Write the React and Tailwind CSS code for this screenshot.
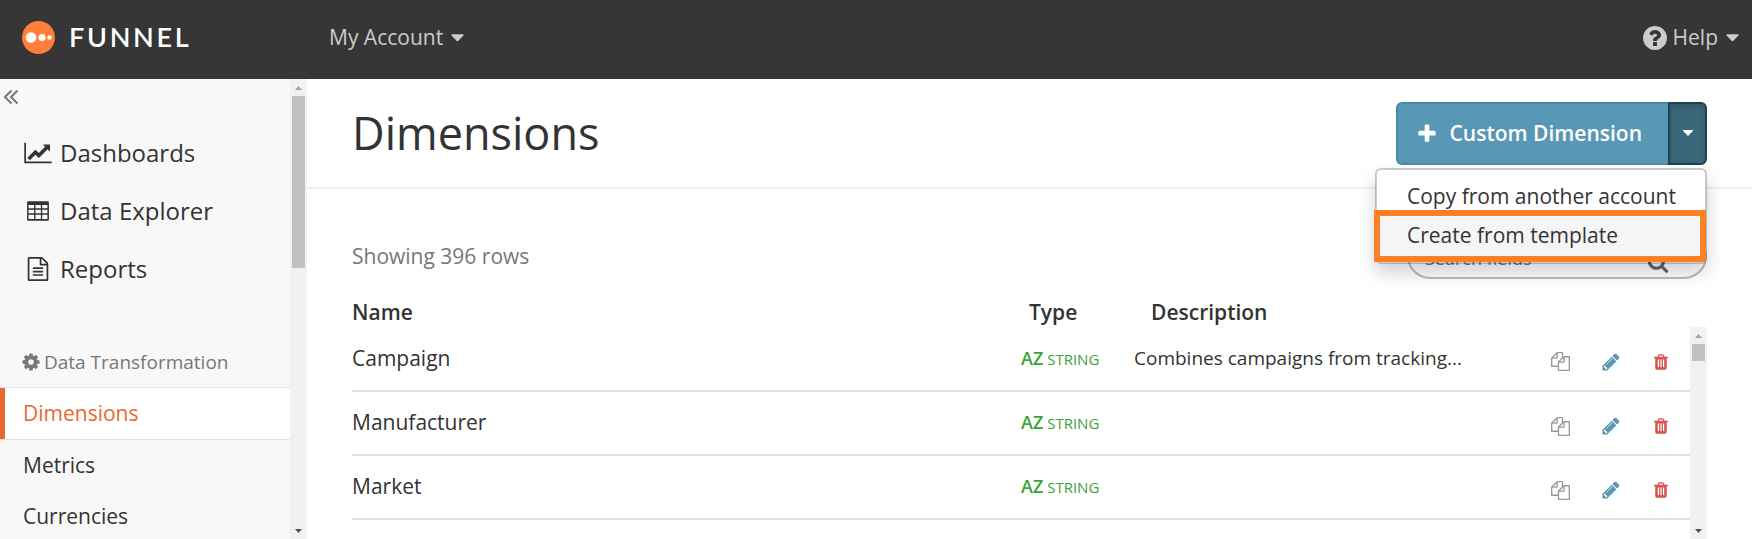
import { useState } from 'react';
import clsx from 'clsx';

// icon outlines, all on a 1792 grid
const icons = {
  table: 'M180 170h1432q100 0 100 100v1252q0 100-100 100h-1432q-100 0-100-100v-1252q0-100 100-100zM190 440v250h410v-250zM700 440v250h410v-250zM1210 440v250h390v-250zM190 800v270h410v-270zM700 800v270h410v-270zM1210 800v270h390v-270zM190 1180v320h410v-320zM700 1180v320h410v-320zM1210 1180v320h390v-320z',
  file: 'M1596 380q28 28 48 76t20 88v1152q0 40-28 68t-68 28h-1344q-40 0-68-28t-28-68v-1600q0-40 28-68t68-28h896q40 0 88 20t76 48zm-444-244v376h376q-10-29-22-41l-313-313q-12-12-41-22zm384 1528v-1024h-416q-40 0-68-28t-28-68v-416h-768v1536h1280zm-1024-864q0-14 9-23t23-9h704q14 0 23 9t9 23v64q0 14-9 23t-23 9h-704q-14 0-23-9t-9-23v-64zm736 224q14 0 23 9t9 23v64q0 14-9 23t-23 9h-704q-14 0-23-9t-9-23v-64q0-14 9-23t23-9h704zm0 256q14 0 23 9t9 23v64q0 14-9 23t-23 9h-704q-14 0-23-9t-9-23v-64q0-14 9-23t23-9h704z',
  cog: 'M1152 896q0-106-75-181t-181-75-181 75-75 181 75 181 181 75 181-75 75-181zm512-109v222q0 12-8 23t-20 13l-185 28q-19 54-39 91 35 50 107 138 10 12 10 25t-9 23q-27 37-99 108t-94 71q-12 0-26-9l-138-108q-44 23-91 38-16 136-29 186-7 28-36 28h-222q-14 0-24.500-8.500t-11.500-21.500l-28-184q-49-16-90-37l-141 107q-10 9-25 9-14 0-25-11-126-114-165-168-7-10-7-23 0-12 8-23 15-21 51-66.500t54-70.500q-27-50-41-99l-183-27q-13-2-21-12.500t-8-23.500v-222q0-12 8-23t19-13l186-28q14-46 39-92-40-57-107-138-10-12-10-24 0-10 9-23 26-36 98.500-107.500t94.500-71.500q13 0 26 10l138 107q44-23 91-38 16-136 29-186 7-28 36-28h222q14 0 24.500 8.500t11.500 21.500l28 184q49 16 90 37l142-107q9-9 24-9 13 0 25 10 129 119 165 170 7 8 7 22 0 12-8 23-15 21-51 66.500t-54 70.500q26 50 41 98l183 28q13 2 21 12.500t8 23.500z',
  help: 'M1024 1376v-192q0-14-9-23t-23-9h-192q-14 0-23 9t-9 23v192q0 14 9 23t23 9h192q14 0 23-9t9-23zm256-672q0-88-55.500-163t-138.500-116-170-41q-243 0-371 213-15 24 8 42l132 100q7 6 19 6 16 0 25-12 53-68 86-92 34-24 86-24 48 0 85.500 26t37.500 59q0 38-20 61t-68 45q-63 28-115.500 86.500t-52.500 125.500v36q0 14 9 23t23 9h192q14 0 23-9t9-23q0-19 21.500-49.500t54.500-49.500q32-18 49-28.500t46-35 44.500-48 28-60.500 12.500-81zm384 192q0 209-103 385.500t-279.500 279.500-385.500 103-385.500-103-279.500-279.500-103-385.500 103-385.500 279.500-279.500 385.500-103 385.500 103 279.500 279.500 103 385.500z',
  plus: 'M1600 736v192q0 40-28 68t-68 28h-416v416q0 40-28 68t-68 28h-192q-40 0-68-28t-28-68v-416h-416q-40 0-68-28t-28-68v-192q0-40 28-68t68-28h416v-416q0-40 28-68t68-28h192q40 0 68 28t28 68v416h416q40 0 68 28t28 68z',
  search: 'M1216 832q0-185-131.500-316.500t-316.500-131.500-316.500 131.500-131.500 316.500 131.500 316.500 316.500 131.500 316.500-131.500 131.500-316.500zm512 832q0 52-38 90t-90 38q-54 0-90-38l-343-342q-179 124-399 124-143 0-273.500-55.500t-225-150-150-225-55.500-273.500 55.500-273.500 150-225 225-150 273.500-55.500 273.500 55.500 225 150 150 225 55.500 273.500q0 220-124 399l343 343q37 37 37 90z',
  copy: 'M1696 384q40 0 68 28t28 68v1216q0 40-28 68t-68 28h-960q-40 0-68-28t-28-68v-288h-544q-40 0-68-28t-28-68v-672q0-40 20-88t48-76l408-408q28-28 76-48t88-20h416q40 0 68 28t28 68v328q68-40 128-40h416zm-544 213l-299 299h299v-299zm-640-384l-299 299h299v-299zm196 647l316-316v-416h-384v416q0 40-28 68t-68 28h-416v640h512v-256q0-40 20-88t48-76zm956 804v-1152h-384v416q0 40-28 68t-68 28h-416v640h896z',
  pencil: 'M491 1536l91-91-235-235-91 91v107h128v128h107zm523-928q0-22-22-22-10 0-17 7l-542 542q-7 7-7 17 0 22 22 22 10 0 17-7l542-542q7-7 7-17zm-54-192l416 416-832 832h-416v-416zm683 96q0 53-37 90l-166 166-416-416 166-165q36-38 90-38 53 0 91 38l235 234q37 39 37 91z',
  trash: 'M704 1376v-704q0-14-9-23t-23-9h-64q-14 0-23 9t-9 23v704q0 14 9 23t23 9h64q14 0 23-9t9-23zm256 0v-704q0-14-9-23t-23-9h-64q-14 0-23 9t-9 23v704q0 14 9 23t23 9h64q14 0 23-9t9-23zm256 0v-704q0-14-9-23t-23-9h-64q-14 0-23 9t-9 23v704q0 14 9 23t23 9h64q14 0 23-9t9-23zm-544-992h448l-48-117q-7-9-17-11h-317q-10 2-17 11zm928 32v64q0 14-9 23t-23 9h-96v948q0 83-47 143.500t-113 60.500h-832q-66 0-113-58.500t-47-141.500v-952h-96q-14 0-23-9t-9-23v-64q0-14 9-23t23-9h309l70-167q15-37 54-63t79-26h320q40 0 79 26t54 63l70 167h309q14 0 23 9t9 23z',
};

const Icon = ({ name, className }) => (
  <svg viewBox="0 0 1792 1792" fill="currentColor" fillRule="evenodd" className={clsx('shrink-0', className)} aria-hidden="true">
    <path d={icons[name]} />
  </svg>
);

const ChartIcon = () => (
  <svg viewBox="0 0 2048 1792" fill="currentColor" className="h-6 w-7" aria-hidden="true">
    <path d="M2048 1536v128h-2048v-1536h128v1408h1920zm-128-1248v435q0 21-19.500 29.500t-35.500-7.500l-121-121-633 633q-10 10-23 10t-23-10l-233-233-416 416-192-192 585-585q10-10 23-10t23 10l233 233 464-464-121-121q-16-16-7.500-35.500t29.500-19.500h435q14 0 23 9t9 23z" />
  </svg>
);

const Caret = ({ className }) => (
  <svg viewBox="0 0 14 8" fill="currentColor" className={className} aria-hidden="true">
    <path d="M1 0h12q1 .4.400 1.200L7.700 7.200q-.7.700-1.400 0L.6 1.200Q0 .4 1 0z" />
  </svg>
);

const Logo = () => (
  <svg viewBox="0 0 33 33" className="size-[33px]" aria-hidden="true">
    <circle cx="16.500" cy="16.500" r="16.500" fill="#ff7f3a" />
    <circle cx="9" cy="16.500" r="5.300" fill="#fff" />
    <circle cx="20" cy="16.500" r="3.500" fill="#fff" />
    <circle cx="27.500" cy="16.500" r="2.200" fill="#fff" />
  </svg>
);

const Scrollbar = ({ thumb }) => (
  <div className="flex w-[17px] shrink-0 flex-col items-center bg-[#f1f1f1]" aria-hidden="true">
    <svg viewBox="0 0 17 17" className="size-[17px] shrink-0 text-[#a3a3a3]" fill="currentColor">
      <path d="M5 11h7L8.500 7z" />
    </svg>
    <div className={clsx('w-[13px] bg-[#c1c1c1]', thumb)} />
    <svg viewBox="0 0 17 17" className="mt-auto size-[17px] shrink-0 text-[#505050]" fill="currentColor">
      <path d="M5 7h7l-3.500 4z" />
    </svg>
  </div>
);

const mainLinks = [
  { label: 'Dashboards', icon: <ChartIcon /> },
  { label: 'Data Explorer', icon: <Icon name="table" className="size-6" /> },
  { label: 'Reports', icon: <Icon name="file" className="size-6" /> },
];

const subLinks = ['Dimensions', 'Metrics', 'Currencies'];

const rows = [
  { name: 'Campaign', description: 'Combines campaigns from tracking...' },
  { name: 'Manufacturer', description: '' },
  { name: 'Market', description: '' },
];

const Sidebar = () => (
  <aside className="flex w-[307px] shrink-0">
    <div className="flex-1 overflow-hidden bg-[#f8f8f8]">
      <button className="mt-2 ml-[3px] flex h-5 w-4 items-center text-[#777]" aria-label="Collapse menu">
        <svg viewBox="0 0 16 16" fill="none" stroke="currentColor" strokeWidth="2" className="size-4">
          <path d="M8.500 1.500L2 8l6.500 6.500M14.500 1.500L8 8l6.500 6.500" />
        </svg>
      </button>
      <nav className="mt-[17px]">
        {mainLinks.map((link) => (
          <a key={link.label} href="#" className="flex h-[58px] items-center gap-2 pl-6 text-2xl text-[#333]">
            <span className="flex w-7 justify-center">{link.icon}</span>
            {link.label}
          </a>
        ))}
      </nav>
      <h2 className="mt-12 flex h-8 items-center gap-[3px] pl-[21px] text-[19px] text-[#777]">
        <Icon name="cog" className="size-5" />
        Data Transformation
      </h2>
      <nav className="mt-[9px]">
        {subLinks.map((label) => (
          <a
            key={label}
            href="#"
            className={clsx(
              'flex items-center text-[21px]',
              label === 'Dimensions'
                ? 'h-[53px] border-y border-y-[#e4e4e4] bg-white text-[#e8692f]'
                : 'h-[51px] pl-[23px] text-[#333]'
            )}
          >
            {label === 'Dimensions' && <span className="mr-[18px] h-full w-[5px] bg-[#e8692f]" />}
            {label}
          </a>
        ))}
      </nav>
    </div>
    <Scrollbar thumb="h-[172px]" />
  </aside>
);

const App = () => {
  const [open, setOpen] = useState(true);

  return (
    <div className="flex h-screen flex-col overflow-hidden bg-white font-['Open_Sans',sans-serif] text-[#333]">
      {/* Top bar */}
      <header className="flex h-[79px] shrink-0 items-center bg-[#363636] pr-[13px] pb-1 pl-[22px] text-[21px] text-[#ccc]">
        <a href="#" className="flex w-[307px] items-center gap-[14px] font-['Lato',sans-serif] text-[27px] font-semibold tracking-widest text-white">
          <Logo />
          FUNNEL
        </a>
        <button className="flex items-center gap-2">
          My Account
          <Caret className="h-2 w-[13px]" />
        </button>
        <button className="ml-auto flex items-center gap-2">
          <span className="flex items-center gap-1">
            <Icon name="help" className="size-7" />
            Help
          </span>
          <Caret className="h-2 w-[13px]" />
        </button>
      </header>

      <div className="flex min-h-0 flex-1">
        <Sidebar />

        <main className="flex min-w-0 flex-1 flex-col">
          {/* Page title */}
          <div className="flex h-[110px] shrink-0 items-center justify-between border-b-2 border-[#eee] pr-[45px] pl-[45px]">
            <h1 className="text-[45px]">Dimensions</h1>
            <div className="relative flex h-[63px]">
              <button className="flex items-center gap-3 rounded-l-md border-2 border-r-0 border-[#4a8aa8] bg-[#5897b5] pt-px pr-[26px] pl-[18px] text-[21px] font-semibold text-white">
                <Icon name="plus" className="size-[22px]" />
                Custom Dimension
              </button>
              <button
                onClick={() => setOpen(!open)}
                aria-label="More options"
                className="flex w-[39px] items-center justify-center rounded-r-md border-2 border-[#22414f] bg-[#396679] text-white shadow-[inset_0_3px_5px_rgba(0,0,0,0.125)]"
              >
                <Caret className="h-[6px] w-3" />
              </button>
              {open && (
                <ul className="absolute top-full right-0 z-10 mt-[3px] w-[332px] rounded-md border-2 border-black/20 bg-white bg-clip-padding pt-[14px] text-[21px] shadow-[0_9px_18px_rgba(0,0,0,0.18)]">
                  <li>
                    <a href="#" className="flex h-[26px] items-center pl-[30px] whitespace-nowrap">Copy from another account</a>
                  </li>
                  <li className="-mr-px -ml-[3px] border-[6px] border-[#ff7f27] bg-[#f5f5f5]">
                    <a href="#" className="flex h-10 items-center pl-[27px] whitespace-nowrap">Create from template</a>
                  </li>
                </ul>
              )}
            </div>
          </div>

          {/* Row count and search */}
          <div className="mt-[44px] flex h-[46px] shrink-0 items-center justify-between pr-[45px] pl-[45px] text-[#777]">
            <p className="pt-[2px] text-[21px]">Showing 396 rows</p>
            <label className="flex h-[46px] w-[300px] items-center rounded-full border-2 border-[#bbb] pr-9 pl-4">
              <input type="text" aria-label="Search fields" placeholder="Search fields" className="min-w-0 flex-1 pt-1 text-lg outline-none placeholder:text-[#777]" />
              <Icon name="search" className="mt-3 size-[22px] text-[#666]" />
            </label>
          </div>

          {/* Dimensions table */}
          <div className="mt-[14px] flex min-h-0 flex-1 pr-[45px] pl-[45px]">
            <div className="min-w-0 flex-1 overflow-hidden">
              <table className="w-full table-fixed text-left">
                <thead>
                  <tr className="h-[34px] text-[21px]">
                    <th className="pt-1 pb-0 leading-7 font-semibold">Name</th>
                    <th className="w-[113px] pt-1 pb-0 pl-2 leading-7 font-semibold">Type</th>
                    <th className="w-[402px] pt-1 pb-0 pl-[17px] leading-7 font-semibold">Description</th>
                    <th className="w-[154px]" aria-label="Actions" />
                  </tr>
                </thead>
                <tbody>
                  {rows.map((row) => (
                    <tr key={row.name} className="h-16 border-b-2 border-[#dfdfdf]">
                      <td className="text-[21px]">{row.name}</td>
                      <td className="pb-[2px] text-[15px] text-[#3ba33b]">
                        <span className="text-lg font-semibold">AZ</span> STRING
                      </td>
                      <td className="text-[19px]">{row.description}</td>
                      <td>
                        <div className="flex items-center justify-end gap-[31px] pt-[6px] pr-5">
                          <button aria-label={`Copy ${row.name}`} className="text-[#999]">
                            <Icon name="copy" className="size-[19px]" />
                          </button>
                          <button aria-label={`Edit ${row.name}`} className="text-[#5897b5]">
                            <Icon name="pencil" className="size-5" />
                          </button>
                          <button aria-label={`Delete ${row.name}`} className="text-[#d9534f]">
                            <Icon name="trash" className="size-[18px]" />
                          </button>
                        </div>
                      </td>
                    </tr>
                  ))}
                </tbody>
              </table>
            </div>
            <div className="flex pt-[34px]">
              <Scrollbar thumb="h-[17px]" />
            </div>
          </div>
        </main>
      </div>
    </div>
  );
};

export default App;
